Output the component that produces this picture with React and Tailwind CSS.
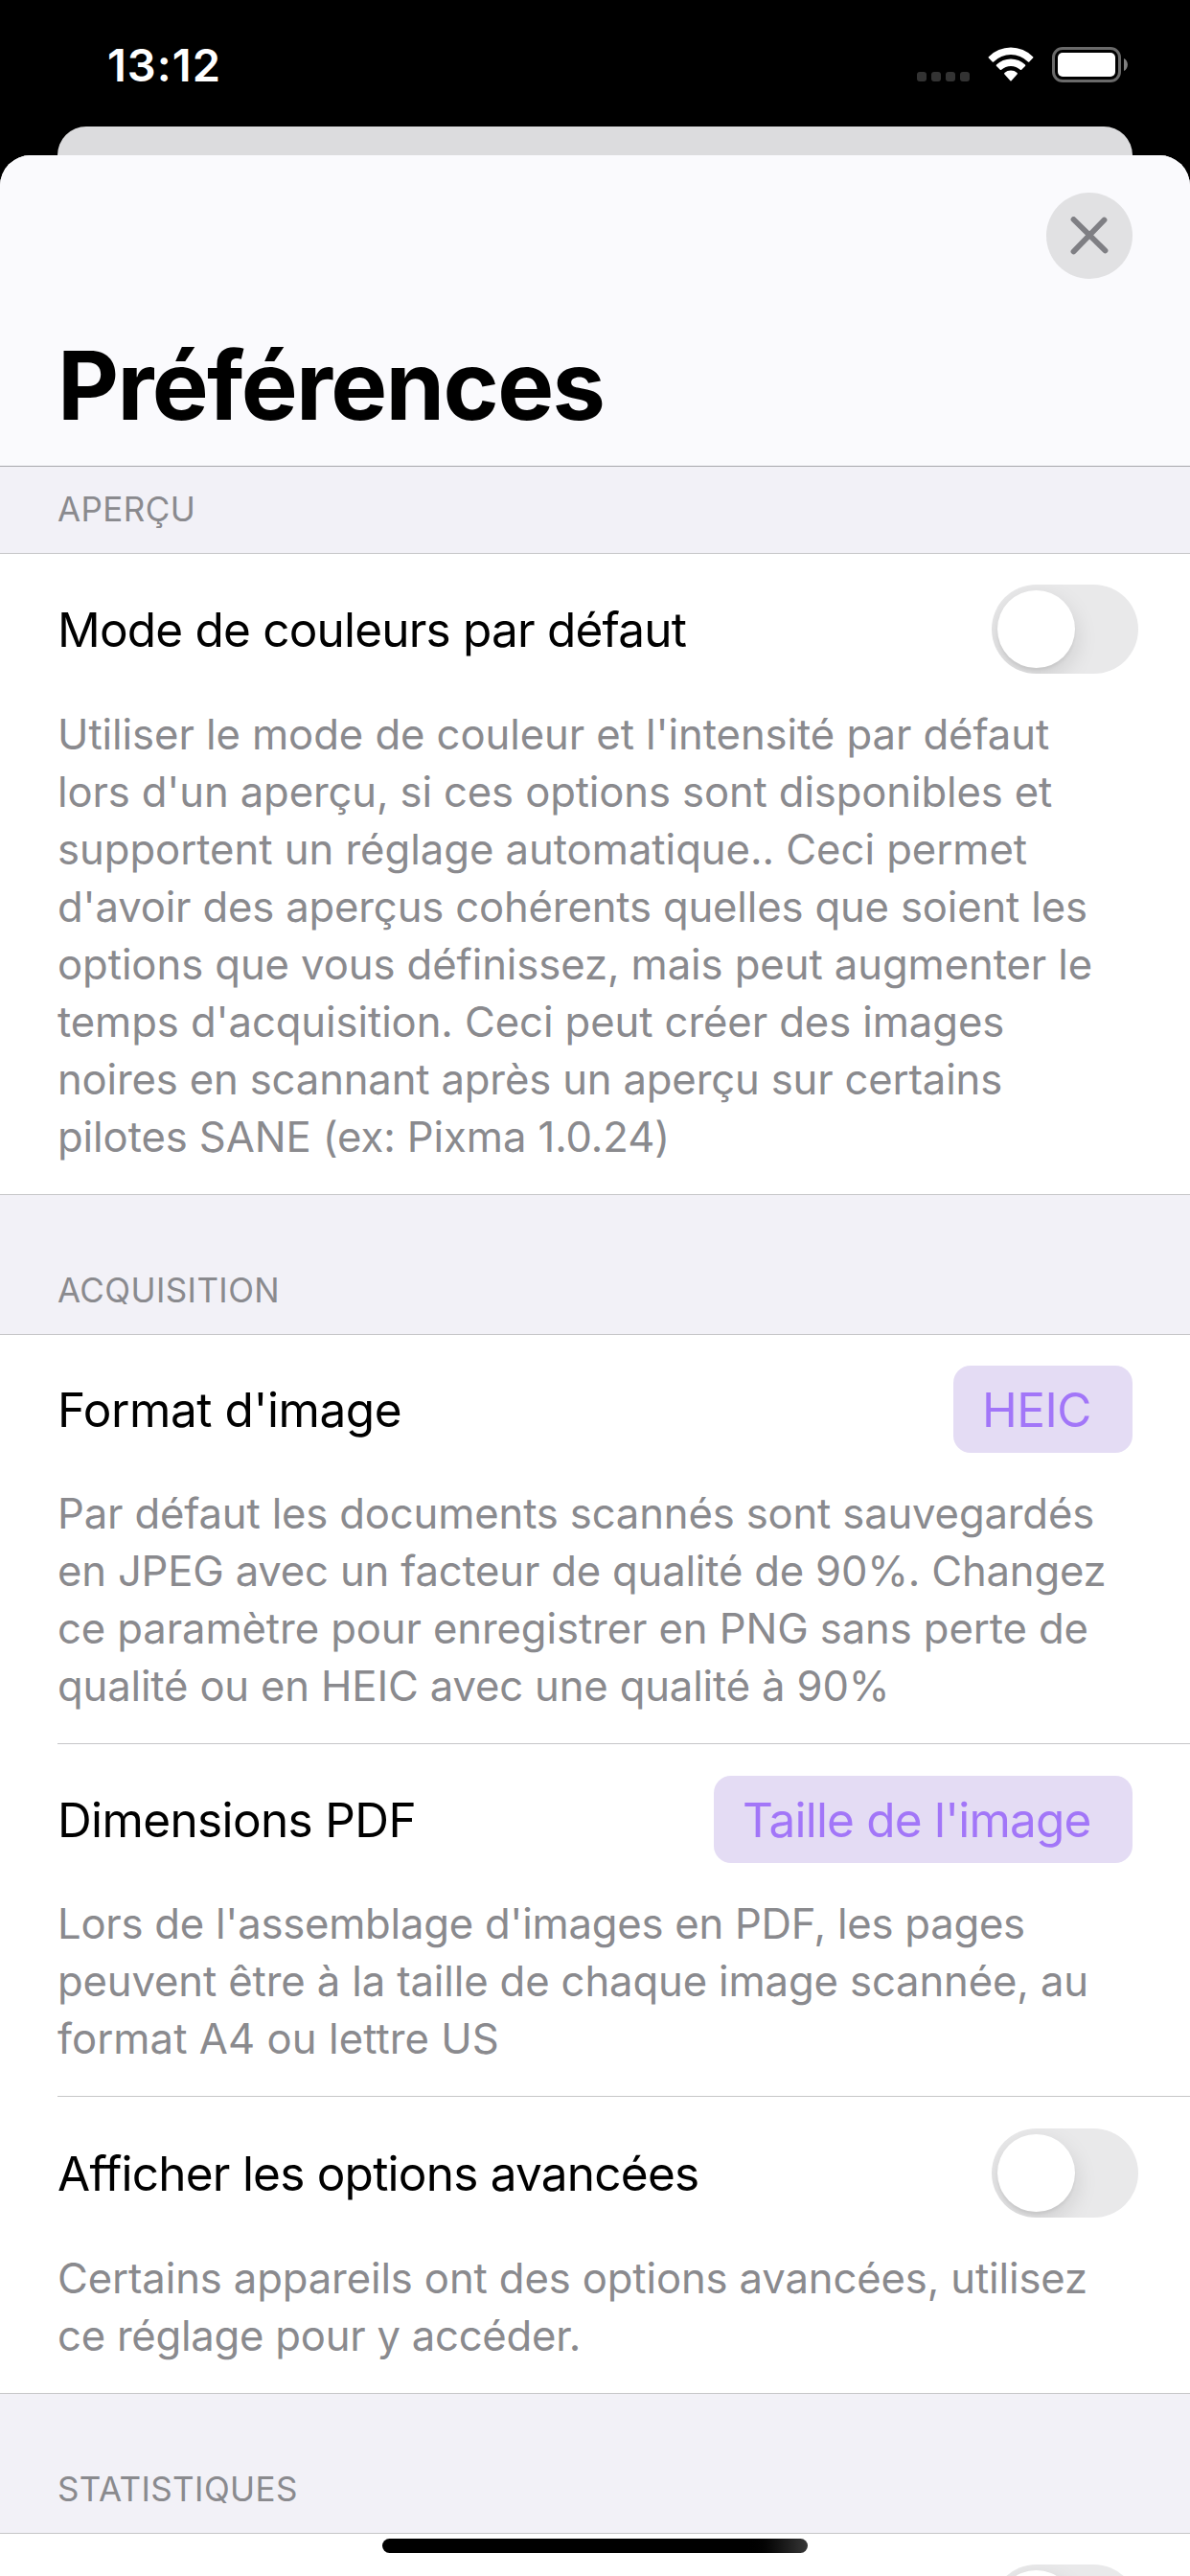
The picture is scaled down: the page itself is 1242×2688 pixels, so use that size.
const COLOR_MODE = [
  ["Utiliser le mode de couleur et l'intensité par défaut", 'tracking-[-0.06px]'],
  ["lors d'un aperçu, si ces options sont disponibles et", 'tracking-[-0.12px]'],
  ['supportent un réglage automatique.. Ceci permet', 'tracking-[-0.02px]'],
  ["d'avoir des aperçus cohérents quelles que soient les", 'tracking-[-0.15px]'],
  ['options que vous définissez, mais peut augmenter le', 'tracking-[-0.07px]'],
  ["temps d'acquisition. Ceci peut créer des images", 'tracking-[-0.08px]'],
  ['noires en scannant après un aperçu sur certains', 'tracking-[-0.15px]'],
  ['pilotes SANE (ex: Pixma 1.0.24)', 'tracking-[-0.08px]'],
];

const IMAGE_FORMAT = [
  ['Par défaut les documents scannés sont sauvegardés', 'tracking-[-0.15px]'],
  ['en JPEG avec un facteur de qualité de 90%. Changez', 'tracking-[-0.18px]'],
  ['ce paramètre pour enregistrer en PNG sans perte de', 'tracking-[-0.09px]'],
  ['qualité ou en HEIC avec une qualité à 90%', 'tracking-[-0.15px]'],
];

const PDF_SIZE = [
  ["Lors de l'assemblage d'images en PDF, les pages", 'tracking-[-0.23px]'],
  ['peuvent être à la taille de chaque image scannée, au', 'tracking-[-0.12px]'],
  ['format A4 ou lettre US', 'tracking-[0.08px]'],
];

const ADVANCED = [
  ['Certains appareils ont des options avancées, utilisez', 'tracking-[-0.12px]'],
  ['ce réglage pour y accéder.', 'tracking-[-0.23px]'],
];

function StatusBar() {
  return (
    <div className="flex h-[132px] shrink-0 items-start justify-between pl-[112px] pr-[64px] text-white">
      <span className="mt-[40px] text-[47px] leading-[56px] font-semibold tracking-[1px]">13:12</span>
      <div className="mt-[48px] flex items-start">
        <div className="mt-[27px] flex gap-[5px]">
          {[0, 1, 2, 3].map((i) => (
            <span key={i} className="size-[10px] rounded-[3px] bg-[#333333]" />
          ))}
        </div>
        <svg className="mt-px ml-[19px] h-[37px] w-[49px]" viewBox="0 0 49 37" fill="#fff">
          <path d="M0.9 10.2 A32.5 32.5 0 0 1 47.1 10.2 Q47.8 10.9 47.1 11.6 L43.3 15.4 Q42.6 16 41.9 15.4 A25.6 25.6 0 0 0 6.1 15.4 Q5.4 16 4.7 15.4 L0.9 11.6 Q0.2 10.9 0.9 10.2Z" />
          <path d="M9 18.6 A21.4 21.4 0 0 1 39 18.6 Q39.7 19.3 39 20 L35.2 23.8 Q34.5 24.4 33.8 23.8 A14.3 14.3 0 0 0 14.2 23.8 Q13.5 24.4 12.8 23.8 L9 20 Q8.3 19.3 9 18.6Z" />
          <path d="M17.4 27 A10 10 0 0 1 30.6 27 Q31.3 27.9 30.6 28.6 L24.6 35.2 Q24 35.8 23.4 35.2 L17.4 28.6 Q16.7 27.9 17.4 27Z" />
        </svg>
        <svg className="ml-[18px] h-[38px] w-[80px]" viewBox="0 0 80 38">
          <rect x="1.5" y="2.5" width="69" height="34" rx="9.5" fill="none" stroke="#6a6a6a" strokeWidth="3" />
          <rect x="6" y="7" width="60" height="25" rx="5" fill="#fff" />
          <path d="M75 13 C80.2 15.2 80.2 23.8 75 26Z" fill="#808080" />
        </svg>
      </div>
    </div>
  );
}

function Toggle() {
  return (
    <div className="mr-[-6px] flex h-[93px] w-[153px] shrink-0 items-center overflow-hidden rounded-full bg-[#e9e9ea] pl-[6px]">
      <span className="size-[81px] rounded-full bg-white shadow-[0_9px_24px_rgba(0,0,0,0.13),0_3px_3px_rgba(0,0,0,0.05)]" />
    </div>
  );
}

function Picker({ children, tracking, width }) {
  return (
    <div className={`flex h-[91px] items-center rounded-[18px] bg-[#e4dcf4] pl-[30px] text-[49.5px] leading-[60px] text-[#a276f8] whitespace-nowrap ${width} ${tracking}`}>
      {children}
    </div>
  );
}

function Row({ title, tracking, control, lines, spacing }) {
  return (
    <div className={`flex flex-col gap-[34px] pr-[60px] pb-[29px] ${spacing}`}>
      <div className="flex items-center justify-between">
        <span className={`text-[49.5px] leading-[60px] whitespace-nowrap text-black ${tracking}`}>{title}</span>
        {control}
      </div>
      <p className="text-[43.6px] leading-[60px] text-[#8a8a8e]">
        {lines.map(([text, ls]) => (
          <span key={text} className={`block whitespace-nowrap ${ls}`}>{text}</span>
        ))}
      </p>
    </div>
  );
}

function SectionHeader({ children, height, tracking }) {
  return (
    <div className={`flex shrink-0 items-end border-b border-[#c6c6c8] bg-[#f2f1f7] pb-[28px] pl-[60px] text-[35px] leading-[36px] text-[#8a8a8e] ${height} ${tracking}`}>
      {children}
    </div>
  );
}

export default function App() {
  return (
    <div className="relative flex h-[2688px] w-[1242px] flex-col overflow-hidden bg-black font-['Inter',sans-serif]">
      <StatusBar />
      <div className="mx-[60px] h-[30px] shrink-0 rounded-t-[30px] bg-[#dcdcde]" />
      <div className="flex grow flex-col overflow-hidden rounded-t-[32px] bg-white">
        <header className="flex h-[325px] shrink-0 flex-col border-b border-[#a7a7ac] bg-[#fafafd] px-[60px] pt-[39px]">
          <button className="flex size-[90px] items-center justify-center self-end rounded-full bg-[#e1e1e3]">
            <svg className="size-[40px]" viewBox="0 0 40 40" stroke="#7f7f84" strokeWidth="5.8" strokeLinecap="round">
              <path d="M3.5 3 L36.5 35.5 M35.5 3.5 L3.5 36.5" />
            </svg>
          </button>
          <h1 className="mt-[51px] text-[99px] leading-[120px] font-bold tracking-[-1.65px] text-black">Préférences</h1>
        </header>

        <SectionHeader height="h-[91px]" tracking="tracking-[0.4px]">APERÇU</SectionHeader>
        <section className="border-b border-[#c6c6c8] pl-[60px]">
          <Row
            title="Mode de couleurs par défaut"
            tracking="tracking-[-0.8px]"
            control={<Toggle />}
            lines={COLOR_MODE}
            spacing="pt-[32px]"
          />
        </section>

        <SectionHeader height="h-[146px]" tracking="tracking-[0.4px]">ACQUISITION</SectionHeader>
        <section className="border-b border-[#c6c6c8] pl-[60px]">
          <div className="border-b border-[#c6c6c8]">
            <Row
              title="Format d'image"
              tracking="tracking-[-0.43px]"
              control={<Picker width="w-[187px]" tracking="tracking-[-0.5px]">HEIC</Picker>}
              lines={IMAGE_FORMAT}
              spacing="pt-[32px]"
            />
          </div>
          <div className="border-b border-[#c6c6c8]">
            <Row
              title="Dimensions PDF"
              tracking="tracking-[-0.63px]"
              control={<Picker width="w-[437px]" tracking="tracking-[-0.8px]">Taille de l'image</Picker>}
              lines={PDF_SIZE}
              spacing="pt-[33px]"
            />
          </div>
          <Row
            title="Afficher les options avancées"
            tracking="tracking-[-0.77px]"
            control={<Toggle />}
            lines={ADVANCED}
            spacing="pt-[33px]"
          />
        </section>

        <SectionHeader height="h-[146px]" tracking="tracking-[0.4px]">STATISTIQUES</SectionHeader>
        <div className="flex justify-end pt-[32px] pr-[60px]">
          <Toggle />
        </div>
      </div>
      <div className="absolute bottom-[24px] left-[399px] h-[15px] w-[444px] rounded-full bg-linear-to-r from-black from-85% to-[#383838]" />
    </div>
  );
}
